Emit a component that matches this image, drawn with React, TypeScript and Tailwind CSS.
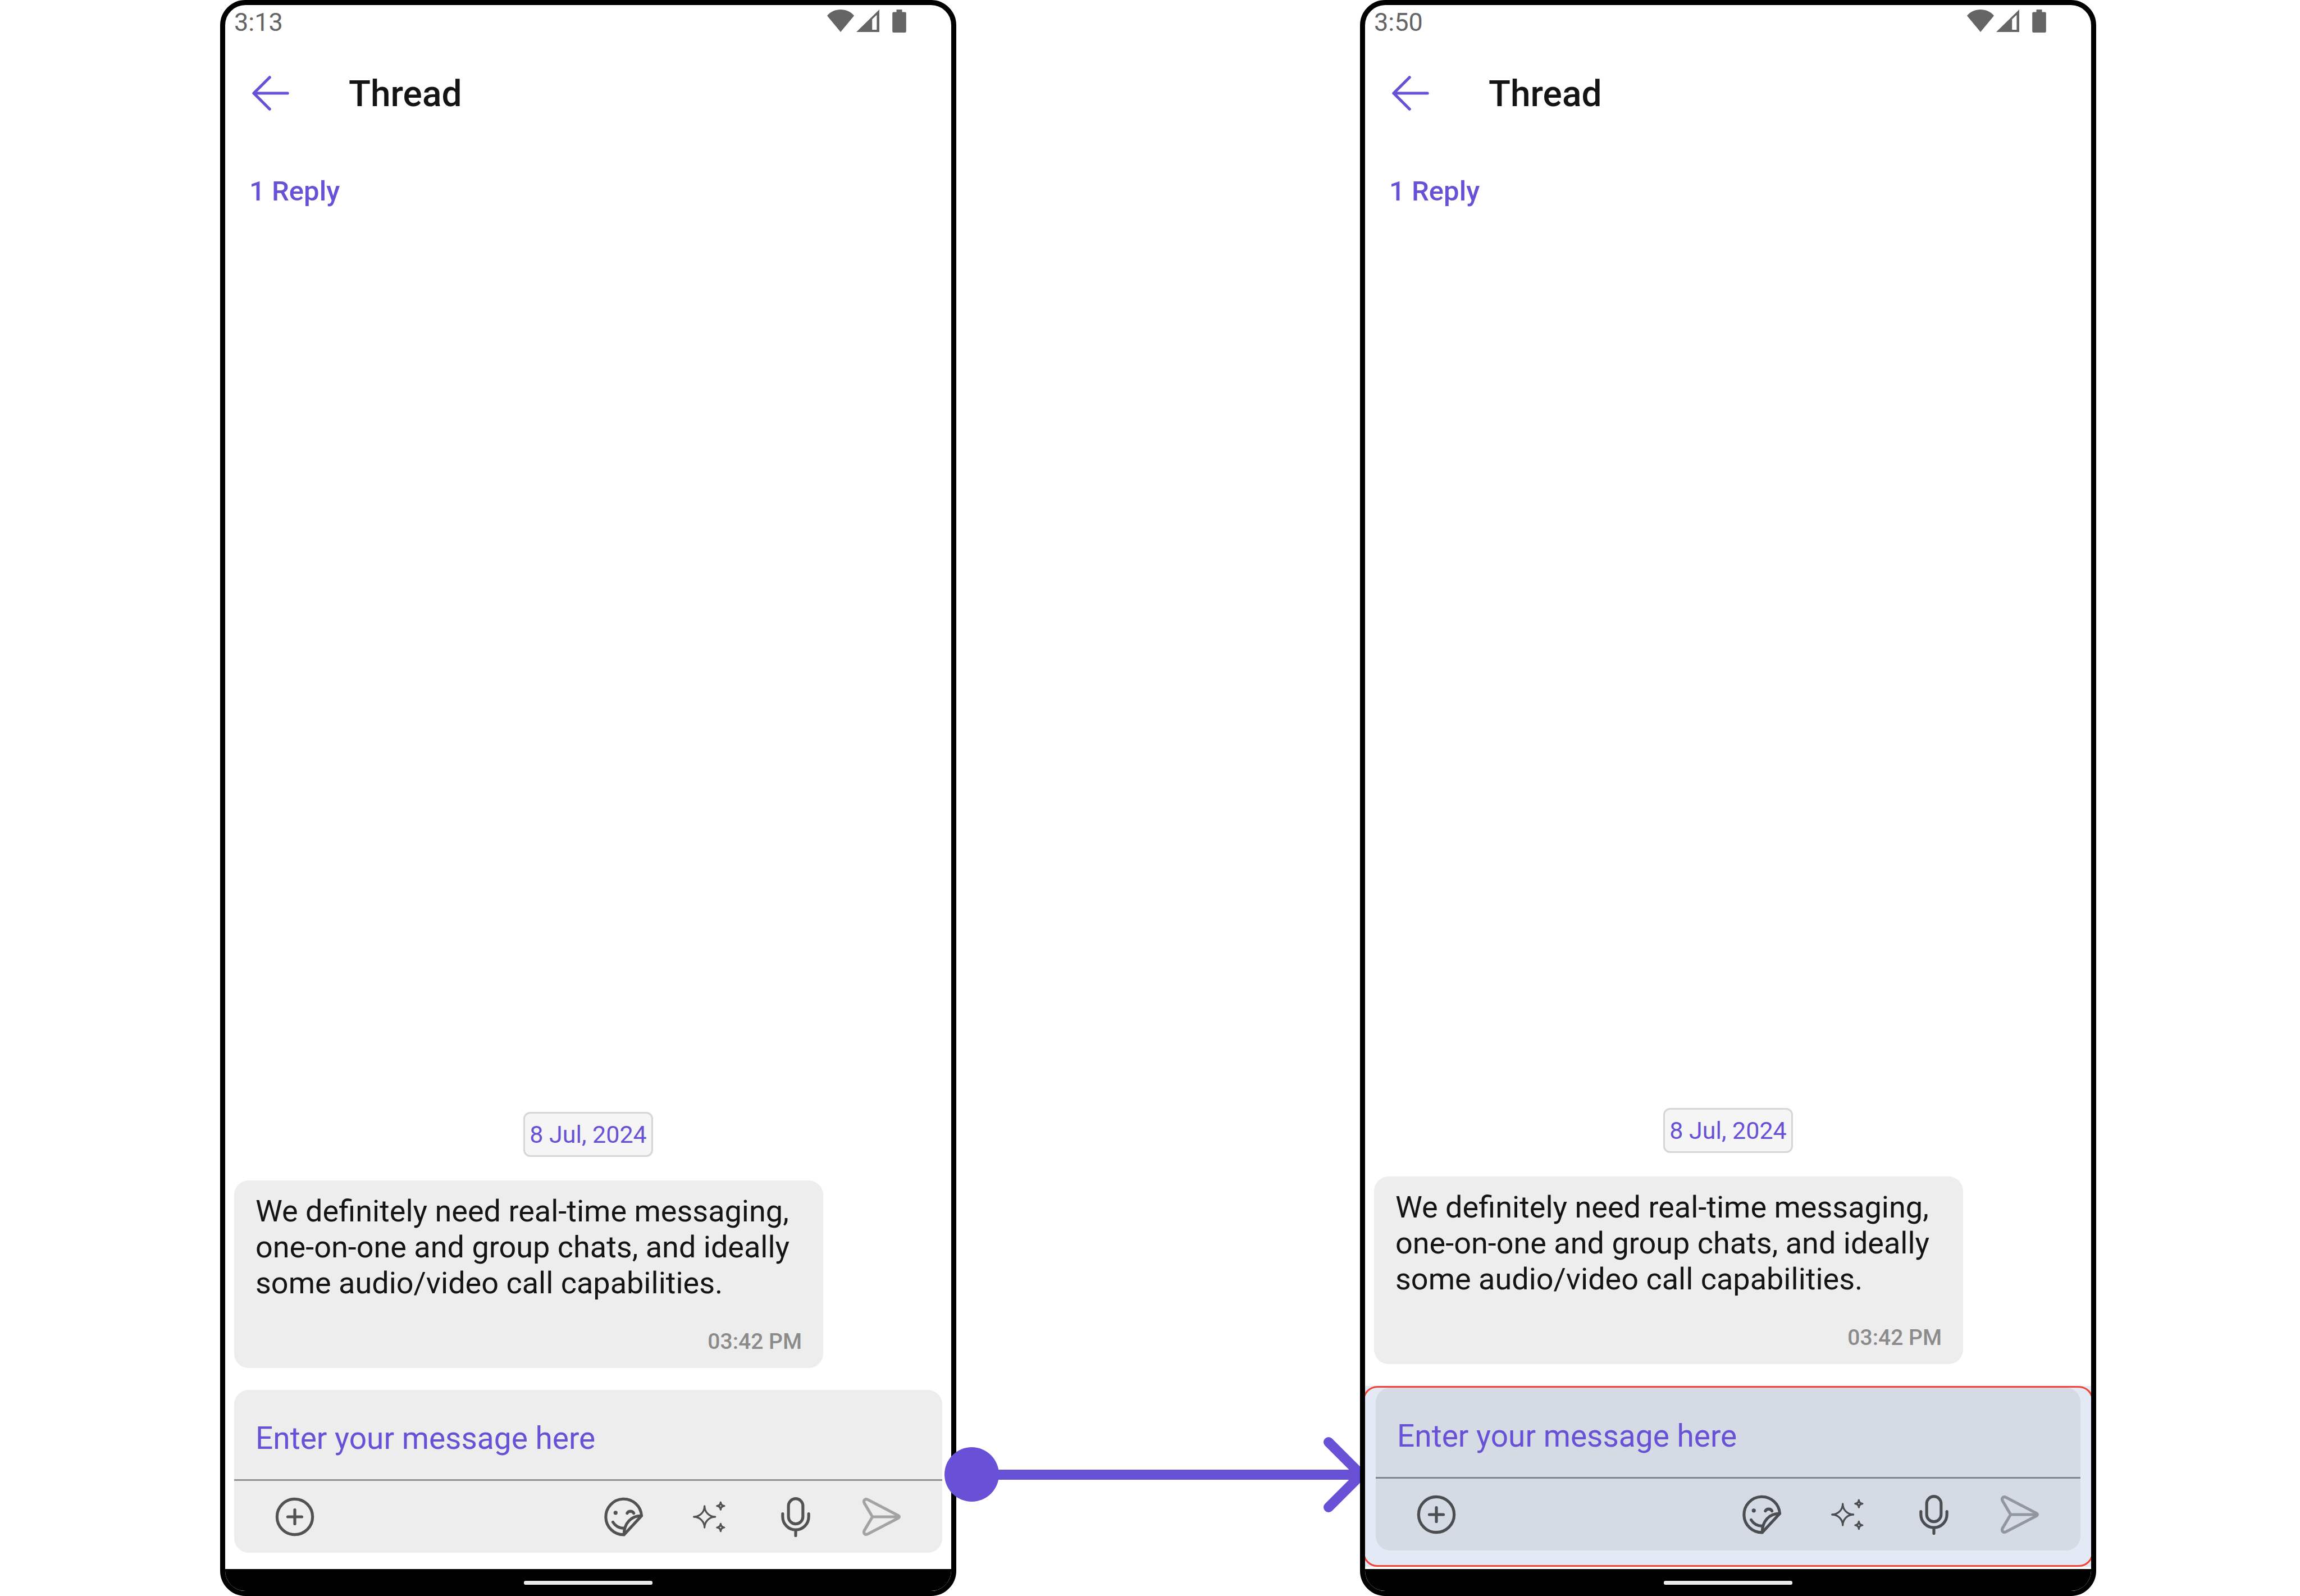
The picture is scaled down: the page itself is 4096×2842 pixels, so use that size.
import type { ReactNode } from "react";

type PhoneProps = { time: string; highlighted?: boolean; className?: string };

function StatusBar({ time }: { time: string }) {
  return (
    <div className="flex items-start justify-between pl-4 pr-20 text-[#656565]">
      <span className="mt-[5px] text-[45px] leading-[52px]">{time}</span>
      <div className="mt-2 flex items-start" aria-hidden="true">
        <svg className="h-10 w-12" viewBox="0 0 53 44">
          <path d="M0 12C7 4 16 0 26.500 0S46 4 53 12L26.500 44Z" fill="currentColor" />
        </svg>
        <svg className="ml-1 h-10 w-[41px]" viewBox="0 0 45 44">
          <path
            d="M0 44L45 0V44ZM31 19V39.500H40V10.500Z"
            fill="currentColor"
            fillRule="evenodd"
          />
        </svg>
        <svg className="ml-[23px] h-[41px] w-[25px]" viewBox="0 0 27 45">
          <path
            d="M8 0H19V5H24.500Q27 5 27 7.500V42.500Q27 45 24.500 45H2.500Q0 45 0 42.500V7.500Q0 5 2.500 5H8Z"
            fill="currentColor"
          />
        </svg>
      </div>
    </div>
  );
}

function IconButton({ label, className = "", children }: { label: string; className?: string; children: ReactNode }) {
  return (
    <button type="button" aria-label={label} className={className}>
      <svg
        className="block size-[76px]"
        viewBox="-42 -42 84 84"
        fill="none"
        stroke="currentColor"
        strokeWidth="5.700"
        strokeLinecap="round"
        strokeLinejoin="round"
      >
        {children}
      </svg>
    </button>
  );
}

function Composer({ highlighted }: { highlighted?: boolean }) {
  return (
    <form
      className={
        highlighted
          ? "overflow-hidden rounded-[26px] bg-[#d5dbe5] text-[#4b4d50]"
          : "mx-4 overflow-hidden rounded-[26px] bg-[#ededed] text-[#525252]"
      }
      onSubmit={(e) => e.preventDefault()}
    >
      <input
        type="text"
        aria-label="Message"
        placeholder="Enter your message here"
        className="block h-[159px] w-full bg-transparent px-[38px] pt-3 text-[55px] text-[#6851d6] outline-none placeholder:text-[#6851d6] placeholder:opacity-100"
      />
      <div
        className={
          highlighted
            ? "flex h-[131px] items-center justify-between border-t-[3px] border-[#82868d] px-[70px]"
            : "flex h-[131px] items-center justify-between border-t-[3px] border-[#929292] px-[70px]"
        }
      >
        <IconButton label="Add attachment">
          <circle r="35" />
          <path d="M-13.800 0H13.800M0 -13.800V13.800" />
        </IconButton>
        <div className="flex gap-[77px]">
          <IconButton label="Stickers">
            <path d="M34.800 -2A35.200 35.200 0 1 0 0.200 35.300L34.800 -2C14 -2 0.200 13 0.200 35.300" />
            <path d="M6.500 -7C9 -12.300 17 -12.300 19.500 -7" />
            <path d="M-21.500 10.500Q-14 22.500 0 22.500" />
            <circle cx="-16.300" cy="-8" r="4" fill="currentColor" stroke="none" />
          </IconButton>
          <IconButton label="AI assistant">
            <g strokeWidth="3.600">
              <path d="M-10.300 -21A21 21 0 0 0 10.700 0A21 21 0 0 0 -10.300 21A21 21 0 0 0 -31.300 0A21 21 0 0 0 -10.300 -21Z" />
              <path d="M21.400 -28.500Q21.900 -21.800 28.600 -21.300Q21.900 -20.800 21.400 -14.100Q20.900 -20.800 14.200 -21.300Q20.900 -21.800 21.400 -28.500Z" />
              <path d="M21.400 13.800Q21.900 20.500 28.600 21Q21.900 21.500 21.400 28.200Q20.900 21.500 14.200 21Q20.900 20.500 21.400 13.800Z" />
            </g>
          </IconButton>
          <IconButton label="Record voice message">
            <rect x="-14.200" y="-35.700" width="28.400" height="49.700" rx="14.200" />
            <path d="M-25.600 -6V0A25.600 25.600 0 0 0 25.600 0V-6M0 25.600V37" />
          </IconButton>
          <IconButton label="Send" className={highlighted ? "text-[#92979e]" : "text-[#a3a3a3]"}>
            <path d="M-18 0L-34 -27C-36.500 -32 -32.500 -36.500 -27.500 -34L33 -2.400Q36.500 0 33 2.400L-27.500 34C-32.500 36.500 -36.500 32 -34 27ZM-18 0H33" />
          </IconButton>
        </div>
      </div>
    </form>
  );
}

function Phone({ time, highlighted, className = "" }: PhoneProps) {
  return (
    <section
      className={`flex flex-col overflow-hidden rounded-[45px] border-[9px] border-black bg-white ${className}`}
    >
      <StatusBar time={time} />

      <header className="mt-16 flex items-start pl-12">
        <button type="button" aria-label="Back" className="pt-[5px] text-[#6851d6]">
          <svg
            className="block h-[62px] w-[66px]"
            viewBox="0 0 72 68"
            fill="none"
            stroke="currentColor"
            strokeWidth="5.700"
            strokeLinecap="round"
            strokeLinejoin="round"
          >
            <path d="M34 3L3 34L34 65M3 34H69" />
          </svg>
        </button>
        <h1 className="ml-[106px] text-[64px] font-medium leading-[76px] text-[#141414]">Thread</h1>
      </header>

      <p className="mt-[107px] pl-[43px] text-[49px] font-medium leading-[56px] text-[#6851d6]">1 Reply</p>

      <div className="flex flex-1 flex-col justify-end px-4 pb-[39px]">
        <time className="self-center rounded-xl border-[3px] border-[#d6d6d6] bg-[#f5f5f5] px-2 text-[43px] leading-[74px] text-[#6851d6]">
          8 Jul, 2024
        </time>
        <article className="mt-[42px] w-full max-w-[1049px] rounded-[26px] bg-[#ededed] px-[38px] pb-[23px] pt-[23px]">
          <p className="text-[54px] leading-[64px] text-[#141414]">
            We definitely need real-time messaging, one-on-one and group chats, and ideally some
            audio/video call capabilities.
          </p>
          <p className="mt-12 text-right text-[39px] font-medium leading-[48px] text-[#8b8b8b]">
            03:42 PM
          </p>
        </article>
      </div>

      {highlighted ? (
        <div className="-mx-1 mb-1 bg-[#e3eaf5]">
          <div className="rounded-[26px] border-[3px] border-[#f44336] px-5 pb-[26px]">
            <Composer highlighted />
          </div>
        </div>
      ) : (
        <div className="mb-[29px]">
          <Composer />
        </div>
      )}

      <div className="flex h-[39px] justify-center bg-black pt-[21px]">
        <div className="h-[7px] w-[229px] rounded-[3px] bg-[#ebebeb]" />
      </div>
    </section>
  );
}

function Connector() {
  return (
    <div className="z-10 flex flex-col justify-end pb-[168px]" aria-hidden="true">
      <div className="-ml-[21px] flex items-center">
        <div className="size-[97px] rounded-full bg-[#6851d6]" />
        <div className="-ml-2 -mr-[68px] h-[18px] flex-1 bg-[#6851d6]" />
        <svg className="-my-5 h-[136px] w-[68px] overflow-visible" viewBox="0 0 68 136">
          <path
            d="M12 10L70 68L12 126"
            fill="none"
            stroke="#6851d6"
            strokeWidth="18"
            strokeLinecap="round"
          />
        </svg>
      </div>
    </div>
  );
}

export default function App() {
  return (
    <main className="grid min-h-screen grid-cols-[392fr_1311fr_719fr_1311fr_363fr] bg-white font-['Roboto',sans-serif]">
      <Phone time="3:13" className="col-start-2" />
      <Connector />
      <Phone time="3:50" highlighted className="z-20" />
    </main>
  );
}
